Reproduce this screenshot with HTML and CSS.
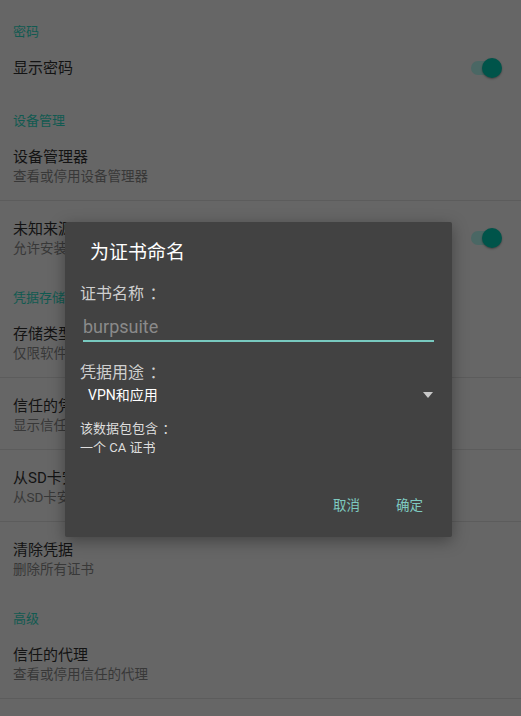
FILE: index.html
```html
<!DOCTYPE html>
<html lang="zh-CN">
<head>
<meta charset="UTF-8">
<title>安全</title>
<link rel="stylesheet" href="styles.css">
</head>
<body>
    <div class="settings">
        <div class="category">密码</div>
        <div class="pref single last">
            <div class="pref-text">
                <div class="pref-title">显示密码</div>
            </div>
            <div class="switch"><span class="track"></span><span class="knob"></span></div>
        </div>

        <div class="category">设备管理</div>
        <div class="pref">
            <div class="pref-text">
                <div class="pref-title">设备管理器</div>
                <div class="pref-summary">查看或停用设备管理器</div>
            </div>
        </div>
        <div class="pref last">
            <div class="pref-text">
                <div class="pref-title">未知来源</div>
                <div class="pref-summary">允许安装来源不明的应用</div>
            </div>
            <div class="switch"><span class="track"></span><span class="knob"></span></div>
        </div>

        <div class="category">凭据存储</div>
        <div class="pref">
            <div class="pref-text">
                <div class="pref-title">存储类型</div>
                <div class="pref-summary">仅限软件</div>
            </div>
        </div>
        <div class="pref">
            <div class="pref-text">
                <div class="pref-title">信任的凭据</div>
                <div class="pref-summary">显示信任的CA证书</div>
            </div>
        </div>
        <div class="pref">
            <div class="pref-text">
                <div class="pref-title">从SD卡安装</div>
                <div class="pref-summary">从SD卡安装证书</div>
            </div>
        </div>
        <div class="pref last">
            <div class="pref-text">
                <div class="pref-title">清除凭据</div>
                <div class="pref-summary">删除所有证书</div>
            </div>
        </div>

        <div class="category">高级</div>
        <div class="pref">
            <div class="pref-text">
                <div class="pref-title">信任的代理</div>
                <div class="pref-summary">查看或停用信任的代理</div>
            </div>
        </div>
    </div>

    <div class="dialog">
        <div class="dialog-title">为证书命名</div>
        <div class="dialog-body">
            <div class="field-label">证书名称<span class="colon">：</span></div>
            <div class="text-input">burpsuite</div>
            <div class="field-label usage">凭据用途<span class="colon">：</span></div>
            <div class="spinner">
                <span>VPN和应用</span>
                <svg width="10" height="6" viewBox="0 0 10 6"><path d="M0 0 L10 0 L5 6 Z" fill="#c8c8c8"/></svg>
            </div>
            <div class="info">该数据包包含<span class="colon">：</span><br>一个 CA 证书</div>
        </div>
        <div class="dialog-buttons">
            <button class="dialog-btn">取消</button>
            <button class="dialog-btn">确定</button>
        </div>
    </div>
</body>
</html>
```

FILE: styles.css
```css
body {
    margin: 0;
    background-color: #666666;
    font-family: Roboto, "Noto Sans CJK SC", sans-serif;
    width: 521px;
    height: 716px;
    overflow: hidden;
    position: relative;
}

.settings {
    padding-top: 6px;
}

.category {
    padding: 18px 13px 0;
    line-height: 16px;
    font-size: 13px;
    color: #115a51;
}

.pref {
    display: flex;
    align-items: center;
    padding: 18px 19px 15px 13px;
    border-bottom: 1px solid #5c5c5c;
}

.pref.last {
    border-bottom-color: transparent;
    padding-bottom: 14px;
}

.pref.single.last {
    padding-bottom: 16px;
}

.pref-text {
    flex: 1;
}

.pref-title {
    font-size: 15px;
    line-height: 20px;
    color: #131313;
}

.pref-summary {
    font-size: 13.5px;
    line-height: 18px;
    color: #383838;
}

.switch {
    position: relative;
    width: 31px;
    height: 20px;
}

.track {
    position: absolute;
    left: 0;
    right: 4px;
    top: 3px;
    height: 14px;
    border-radius: 7px;
    background-color: #4a6764;
}

.knob {
    position: absolute;
    right: 0;
    top: 0;
    width: 20px;
    height: 20px;
    border-radius: 50%;
    background-color: #00544a;
    box-shadow: 0 1px 2px rgba(0, 0, 0, 0.35);
}

.dialog {
    position: absolute;
    left: 65px;
    top: 222px;
    width: 387px;
    height: 315px;
    background-color: #424242;
    border-radius: 2px;
    box-shadow: 0 4px 16px rgba(0, 0, 0, 0.35);
    display: flex;
    flex-direction: column;
}

.dialog-title {
    padding: 19px 25px 0;
    font-size: 19px;
    line-height: 24px;
    color: #ffffff;
}

.dialog-body {
    padding: 0 15px;
}

.field-label {
    margin-top: 18px;
    font-size: 16px;
    line-height: 22px;
    color: #cfcfcf;
}

.colon {
    padding-left: 0.35em;
}

.field-label.usage {
    margin-top: 20px;
}

.text-input {
    margin: 10px 3px 0;
    font-size: 18px;
    line-height: 24px;
    color: #8a8a8a;
    padding-bottom: 1px;
    border-bottom: 2px solid #78c9bf;
}

.spinner {
    display: flex;
    justify-content: space-between;
    align-items: center;
    margin-top: 1px;
    padding: 0 4px 0 8px;
    font-size: 14px;
    line-height: 20px;
    color: #ffffff;
}

.info {
    margin-top: 14px;
    font-size: 13px;
    line-height: 19px;
    color: #dedede;
}

.dialog-buttons {
    margin-top: auto;
    display: flex;
    justify-content: flex-end;
    gap: 20px;
    padding: 0 21px 14px;
}

.dialog-btn {
    background: none;
    border: none;
    padding: 0 8px;
    font-family: inherit;
    font-size: 13.5px;
    line-height: 36px;
    color: #7ecac0;
    cursor: pointer;
}
```
